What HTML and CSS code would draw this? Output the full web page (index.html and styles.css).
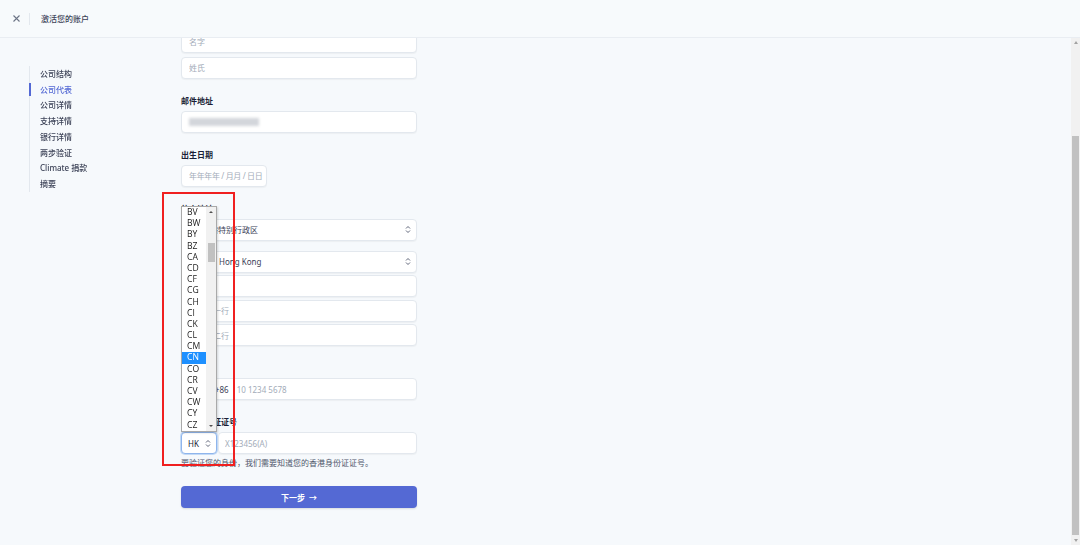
FILE: index.html
```html
<!DOCTYPE html>
<html lang="zh-CN">
<head>
    <meta charset="UTF-8">
    <meta name="viewport" content="width=device-width, initial-scale=1.0">
    <title>激活您的账户</title>
    <link rel="stylesheet" href="styles.css">
</head>
<body>
    <header class="topbar">
        <button class="close-btn" type="button" aria-label="关闭">
            <svg width="7" height="7" viewBox="0 0 7 7"><path d="M0.5 0.5 L6.5 6.5 M6.5 0.5 L0.5 6.5" stroke="#6b7385" stroke-width="1.1" fill="none"/></svg>
        </button>
        <span class="topbar-divider"></span>
        <h1 class="topbar-title">激活您的账户</h1>
    </header>

    <div class="workspace">
        <main class="page-scroll">
            <div class="page">
                <nav class="steps">
                    <a class="step">公司结构</a>
                    <a class="step active">公司代表</a>
                    <a class="step">公司详情</a>
                    <a class="step">支持详情</a>
                    <a class="step">银行详情</a>
                    <a class="step">两步验证</a>
                    <a class="step">Climate 捐款</a>
                    <a class="step">摘要</a>
                </nav>

                <form class="rep-form">
                    <div class="intro">
                        <h2>验证您的个人详细信息</h2>
                        <p>Stripe 会收集这些信息，以更好地为您服务。</p>
                    </div>

                    <div class="field">
                        <label>法定名称</label>
                        <div class="stack">
                            <input type="text" placeholder="名字">
                            <input type="text" placeholder="姓氏">
                        </div>
                    </div>

                    <div class="field">
                        <label>邮件地址</label>
                        <div class="input-box"><span class="redacted"></span></div>
                    </div>

                    <div class="field">
                        <label>出生日期</label>
                        <input type="text" class="date-input" placeholder="年年年年 / 月月 / 日日">
                    </div>

                    <div class="field">
                        <label>住宅地址</label>
                        <div class="stack address">
                            <select class="region"><option>香港特别行政区</option></select>
                            <select class="country"><option>Hong Kong</option></select>
                            <input type="text" placeholder="城市">
                            <input type="text" placeholder="地址第一行">
                            <input type="text" placeholder="地址第二行">
                        </div>
                    </div>

                    <div class="field">
                        <label>手机号码</label>
                        <div class="input-group">
                            <span class="dial-flag"></span>
                            <span class="dial-code">+86</span>
                            <input type="text" placeholder="10 1234 5678">
                        </div>
                    </div>

                    <div class="field">
                        <label>香港身份证证号</label>
                        <div class="id-row">
                            <select class="id-type"><option>HK</option></select>
                            <input type="text" placeholder="X123456(A)">
                        </div>
                        <p class="hint">要验证您的身份，我们需要知道您的香港身份证证号。</p>
                    </div>

                    <button type="button" class="next-btn">下一步&nbsp;&nbsp;→</button>
                </form>
            </div>
        </main>

        <div class="scrollbar">
            <span class="sb-btn up"></span>
            <div class="sb-track"><span class="sb-thumb"></span></div>
            <span class="sb-btn down"></span>
        </div>
    </div>

    <div class="select-popup">
        <ul class="popup-list">
            <li>BV</li><li>BW</li><li>BY</li><li>BZ</li><li>CA</li>
            <li>CD</li><li>CF</li><li>CG</li><li>CH</li><li>CI</li>
            <li>CK</li><li>CL</li><li>CM</li><li class="selected">CN</li><li>CO</li>
            <li>CR</li><li>CV</li><li>CW</li><li>CY</li><li>CZ</li>
        </ul>
        <div class="popup-scroll">
            <span class="popup-arrow up"></span>
            <div class="popup-track"><span class="popup-thumb"></span></div>
            <span class="popup-arrow down"></span>
        </div>
    </div>

    <div class="annotation"></div>
</body>
</html>
```

FILE: styles.css
```css
* {
    box-sizing: border-box;
}

body {
    margin: 0;
    height: 545px;
    overflow: hidden;
    position: relative;
    font-family: 'Noto Sans', 'Noto Sans CJK SC', sans-serif;
    font-size: 8px;
    color: #3c4257;
    background-color: #f6f9fc;
}

/* top bar */
.topbar {
    height: 38px;
    display: flex;
    align-items: center;
    background-color: #f7fafc;
    border-bottom: 1px solid #e9edf2;
}

.close-btn {
    width: 29px;
    height: 36px;
    padding: 0 0 0 4px;
    border: none;
    background: none;
    display: flex;
    align-items: center;
    justify-content: center;
}

.topbar-divider {
    width: 1px;
    height: 12px;
    background-color: #e3e8ee;
    margin-right: 11px;
}

.topbar-title {
    margin: 0;
    font-size: 8px;
    font-weight: 500;
    color: #3c4257;
}

/* scroll area */
.workspace {
    display: flex;
    height: 507px;
}

.page-scroll {
    flex: 1;
    overflow: hidden;
    display: flex;
    flex-direction: column-reverse;
}

.scrollbar {
    width: 9px;
    display: flex;
    flex-direction: column;
    background-color: #f1f1f1;
}

.sb-btn {
    height: 9px;
    display: flex;
    align-items: center;
    justify-content: center;
}

.sb-btn::after {
    content: "";
    border-left: 2.5px solid transparent;
    border-right: 2.5px solid transparent;
}

.sb-btn.up::after {
    border-bottom: 3px solid #a3a3a3;
}

.sb-btn.down::after {
    border-top: 3px solid #a3a3a3;
}

.sb-track {
    flex: 1;
    display: flex;
    justify-content: center;
}

.sb-thumb {
    width: 7px;
    height: 399px;
    margin-top: 89px;
    background-color: #c1c1c1;
}

.page {
    flex-shrink: 0;
    display: flex;
    align-items: flex-start;
    padding: 0 0 37px 29px;
}

/* side steps */
.steps {
    position: sticky;
    top: 28px;
    width: 152px;
    display: flex;
    flex-direction: column;
    border-left: 1px solid #e3e8ee;
}

.step {
    position: relative;
    line-height: 15.7px;
    padding-left: 10px;
    color: #3c4257;
    font-weight: 500;
}

.step.active {
    color: #5469d4;
}

.step.active::before {
    content: "";
    position: absolute;
    left: -1px;
    top: 1px;
    bottom: 1px;
    width: 2px;
    background-color: #5469d4;
}

/* form */
.rep-form {
    width: 236px;
    padding-top: 32px;
}

.intro h2 {
    margin: 0;
    font-size: 16px;
    line-height: 24px;
    color: #1a1f36;
}

.intro p {
    margin: 6px 0 0;
    line-height: 12px;
    color: #697386;
}

.field {
    margin-top: 16px;
}

.field label {
    display: block;
    line-height: 12px;
    margin-bottom: 4px;
    font-weight: 700;
    color: #1a1f36;
}

.stack {
    display: flex;
    flex-direction: column;
    gap: 4px;
}

.stack.address {
    gap: 2.5px;
}

.stack.address .country {
    margin-top: 7.5px;
}

input,
select,
.input-box,
.input-group {
    display: block;
    width: 100%;
    height: 22px;
    padding: 0 7px;
    font-family: inherit;
    font-size: 8px;
    color: #3c4257;
    background-color: #fff;
    border: 1px solid #e3e8ee;
    border-radius: 4px;
    box-shadow: 0 1px 1px rgba(0, 0, 0, 0.04);
    outline: none;
}

input::placeholder {
    color: #a3acb9;
}

select {
    appearance: none;
    -webkit-appearance: none;
    background-image: url("data:image/svg+xml;utf8,<svg xmlns='http://www.w3.org/2000/svg' width='6' height='9'><path d='M1 3.5 L3 1.5 L5 3.5 M1 5.5 L3 7.5 L5 5.5' stroke='%234f566b' stroke-width='0.9' fill='none'/></svg>");
    background-repeat: no-repeat;
    background-position: right 5px center;
}

select.region {
    padding-left: 20px;
}

select.country {
    padding-left: 37px;
}

.input-box {
    display: flex;
    align-items: center;
}

.redacted {
    width: 70px;
    height: 8px;
    background-color: #d3d6db;
    filter: blur(1.8px);
}

.date-input {
    width: 86px;
    padding-right: 2px;
    letter-spacing: -0.35px;
}

.input-group {
    display: flex;
    align-items: center;
}

.dial-flag {
    width: 14px;
    height: 9px;
    margin-right: 15px;
    background-color: #de2910;
}

.dial-code {
    margin-right: 8px;
    color: #3c4257;
}

.input-group input {
    height: 20px;
    padding: 0;
    border: none;
    box-shadow: none;
}

.id-row {
    display: flex;
}

.id-row .id-type {
    width: 36px;
    flex-shrink: 0;
    padding-left: 6px;
    color: #1a1f36;
    border-color: #8fb5ec;
    box-shadow: 0 0 0 1px #c3daf6;
}

.id-row input {
    margin-left: 1px;
    padding-left: 6px;
}

.hint {
    margin: 3px 0 0;
    line-height: 12px;
    color: #4f566b;
}

.next-btn {
    display: block;
    width: 100%;
    height: 22px;
    margin-top: 17px;
    border: none;
    border-radius: 4px;
    background-color: #5469d4;
    color: #fff;
    font-family: inherit;
    font-size: 8px;
    font-weight: 700;
    box-shadow: 0 1px 2px rgba(0, 0, 0, 0.12);
}

/* native dropdown open over the id type select */
.select-popup {
    position: absolute;
    left: 181px;
    top: 206px;
    width: 36px;
    height: 226px;
    display: flex;
    background-color: #fff;
    border: 1px solid #a9a9a9;
    box-shadow: 1px 1px 2px rgba(0, 0, 0, 0.15);
}

.popup-list {
    flex: 1;
    margin: 0;
    padding: 0;
    list-style: none;
    font-family: 'Open Sans', sans-serif;
    font-size: 8.6px;
    color: #222;
}

.popup-list li {
    height: 11.2px;
    line-height: 11.2px;
    padding-left: 5px;
}

.popup-list li.selected {
    background-color: #1e90ff;
    color: #fff;
}

.popup-scroll {
    width: 10px;
    display: flex;
    flex-direction: column;
    background-color: #f1f1f1;
}

.popup-arrow {
    height: 10px;
    display: flex;
    align-items: center;
    justify-content: center;
}

.popup-arrow::after {
    content: "";
    border-left: 2px solid transparent;
    border-right: 2px solid transparent;
}

.popup-arrow.up::after {
    border-bottom: 2px solid #505050;
}

.popup-arrow.down::after {
    border-top: 2px solid #505050;
}

.popup-track {
    flex: 1;
    display: flex;
    justify-content: center;
}

.popup-thumb {
    width: 7px;
    height: 19px;
    margin-top: 26px;
    background-color: #c1c1c1;
}

/* red highlight box from the screenshot */
.annotation {
    position: absolute;
    left: 162px;
    top: 192px;
    width: 73px;
    height: 274px;
    border: 2px solid #f02020;
}
```
